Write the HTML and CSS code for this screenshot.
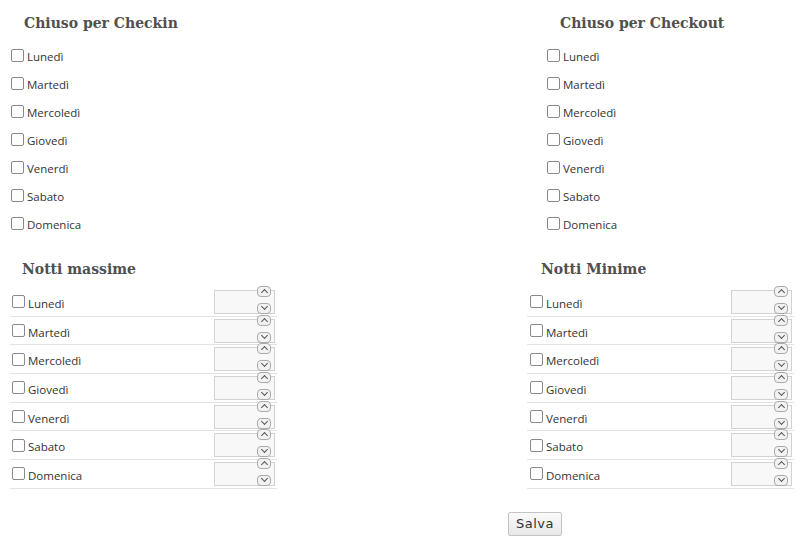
FILE: index.html
```html
<!DOCTYPE html>
<html lang="it">
<head>
<meta charset="utf-8">
<link rel="stylesheet" href="styles.css">
</head>
<body>
<div class="top">
  <section class="col">
    <h2 class="title">Chiuso per Checkin</h2>
    <ul class="days">
      <li><label><input type="checkbox"><span>Lunedì</span></label></li>
      <li><label><input type="checkbox"><span>Martedì</span></label></li>
      <li><label><input type="checkbox"><span>Mercoledì</span></label></li>
      <li><label><input type="checkbox"><span>Giovedì</span></label></li>
      <li><label><input type="checkbox"><span>Venerdì</span></label></li>
      <li><label><input type="checkbox"><span>Sabato</span></label></li>
      <li><label><input type="checkbox"><span>Domenica</span></label></li>
    </ul>
  </section>
  <section class="col">
    <h2 class="title">Chiuso per Checkout</h2>
    <ul class="days">
      <li><label><input type="checkbox"><span>Lunedì</span></label></li>
      <li><label><input type="checkbox"><span>Martedì</span></label></li>
      <li><label><input type="checkbox"><span>Mercoledì</span></label></li>
      <li><label><input type="checkbox"><span>Giovedì</span></label></li>
      <li><label><input type="checkbox"><span>Venerdì</span></label></li>
      <li><label><input type="checkbox"><span>Sabato</span></label></li>
      <li><label><input type="checkbox"><span>Domenica</span></label></li>
    </ul>
  </section>
</div>

<div class="bottom">
  <section class="tcol">
    <h2 class="title ttl">Notti massime</h2>
    <div class="rows">
      <div class="row"><label><input type="checkbox"><span>Lunedì</span></label><div class="num"><span class="spin up"></span><span class="spin down"></span></div></div>
      <div class="row"><label><input type="checkbox"><span>Martedì</span></label><div class="num"><span class="spin up"></span><span class="spin down"></span></div></div>
      <div class="row"><label><input type="checkbox"><span>Mercoledì</span></label><div class="num"><span class="spin up"></span><span class="spin down"></span></div></div>
      <div class="row"><label><input type="checkbox"><span>Giovedì</span></label><div class="num"><span class="spin up"></span><span class="spin down"></span></div></div>
      <div class="row"><label><input type="checkbox"><span>Venerdì</span></label><div class="num"><span class="spin up"></span><span class="spin down"></span></div></div>
      <div class="row"><label><input type="checkbox"><span>Sabato</span></label><div class="num"><span class="spin up"></span><span class="spin down"></span></div></div>
      <div class="row"><label><input type="checkbox"><span>Domenica</span></label><div class="num"><span class="spin up"></span><span class="spin down"></span></div></div>
    </div>
  </section>
  <section class="tcol">
    <h2 class="title ttl">Notti Minime</h2>
    <div class="rows">
      <div class="row"><label><input type="checkbox"><span>Lunedì</span></label><div class="num"><span class="spin up"></span><span class="spin down"></span></div></div>
      <div class="row"><label><input type="checkbox"><span>Martedì</span></label><div class="num"><span class="spin up"></span><span class="spin down"></span></div></div>
      <div class="row"><label><input type="checkbox"><span>Mercoledì</span></label><div class="num"><span class="spin up"></span><span class="spin down"></span></div></div>
      <div class="row"><label><input type="checkbox"><span>Giovedì</span></label><div class="num"><span class="spin up"></span><span class="spin down"></span></div></div>
      <div class="row"><label><input type="checkbox"><span>Venerdì</span></label><div class="num"><span class="spin up"></span><span class="spin down"></span></div></div>
      <div class="row"><label><input type="checkbox"><span>Sabato</span></label><div class="num"><span class="spin up"></span><span class="spin down"></span></div></div>
      <div class="row"><label><input type="checkbox"><span>Domenica</span></label><div class="num"><span class="spin up"></span><span class="spin down"></span></div></div>
    </div>
  </section>
</div>

<div class="actions">
  <button type="button" class="save">Salva</button>
</div>
</body>
</html>
```

FILE: styles.css
```css
html, body {
  margin: 0;
  padding: 0;
  background: #fff;
}
body {
  font-family: "Open Sans", "DejaVu Sans", sans-serif;
  color: #333;
  font-size: 11.5px;
  width: 803px;
  height: 546px;
  overflow: hidden;
}
.title {
  font-family: "DejaVu Serif", "Liberation Serif", serif;
  font-weight: bold;
  font-size: 14px;
  line-height: 20px;
  color: #505050;
  margin: 0;
}
.top {
  display: grid;
  grid-template-columns: 536px 1fr;
  padding-top: 13px;
}
.col .title {
  padding-left: 24px;
}
.days {
  list-style: none;
  margin: 14px 0 0 0;
  padding: 0 0 0 11px;
  display: flex;
  flex-direction: column;
  gap: 12px;
}
.days li {
  height: 16px;
  display: flex;
  align-items: center;
}
label {
  display: flex;
  align-items: center;
  gap: 3px;
}
label span {
  line-height: 14px;
  padding-top: 4px;
}
input[type="checkbox"] {
  appearance: none;
  -webkit-appearance: none;
  width: 13px;
  height: 13px;
  margin: 0;
  border: 1px solid #8a8a8a;
  border-radius: 2px;
  background: #fff;
  box-sizing: border-box;
  flex: none;
}
.bottom {
  display: grid;
  grid-template-columns: 267px 267px;
  column-gap: 250px;
  padding-left: 10px;
  margin-top: 28px;
}
.ttl {
  padding-left: 12px;
  margin-bottom: 9px;
}
.tcol:nth-child(2) .ttl {
  padding-left: 14px;
}
.rows {
  display: flex;
  flex-direction: column;
}
.row {
  height: 27.7px;
  border-bottom: 1px solid #e3e3e3;
  display: flex;
  align-items: center;
  justify-content: space-between;
  padding-left: 2px;
  padding-right: 2px;
}
.tcol:nth-child(2) .row {
  padding-left: 3px;
}
.num {
  position: relative;
  width: 61px;
  height: 24px;
  border: 1px solid #d2d2d2;
  background: #f8f8f8;
  box-sizing: border-box;
}
.spin {
  position: absolute;
  right: 3px;
  width: 14px;
  height: 11px;
  border: 1px solid #aaa;
  border-radius: 4px;
  background: #f2f2f2;
  box-sizing: border-box;
}
.spin::after {
  content: "";
  position: absolute;
  left: 4px;
  width: 4px;
  height: 4px;
  border-left: 1.3px solid #555;
  border-top: 1.3px solid #555;
}
.up {
  top: -5px;
}
.up::after {
  top: 3px;
  transform: rotate(45deg);
}
.down {
  bottom: -1px;
}
.down::after {
  top: 0px;
  transform: rotate(225deg);
}
.actions {
  padding-left: 508px;
  margin-top: 23px;
}
.save {
  font-family: "DejaVu Sans", "Open Sans", sans-serif;
  font-size: 13px;
  color: #333;
  letter-spacing: 0.5px;
  width: 54px;
  height: 24px;
  padding: 0;
  border: 1px solid #c4c4c4;
  border-radius: 2px;
  background: linear-gradient(#fafafa, #e8e8e8);
}
```
